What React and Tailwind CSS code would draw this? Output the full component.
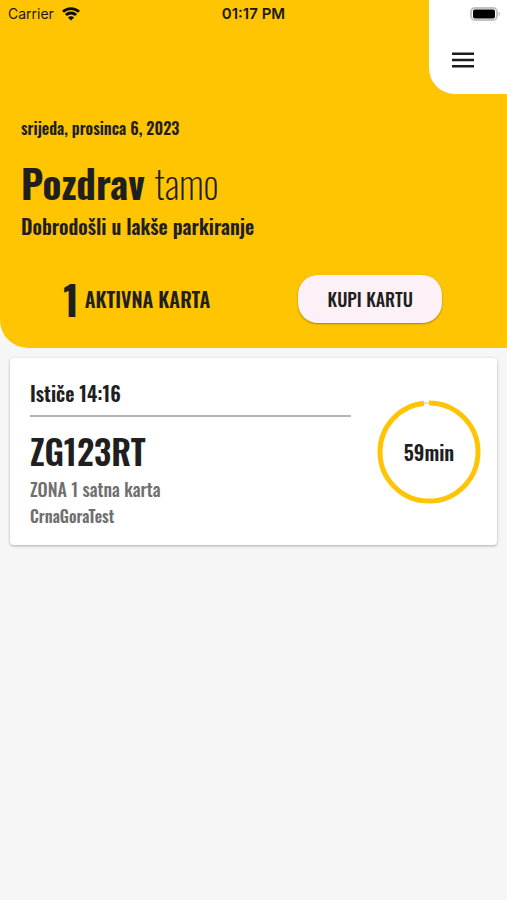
const TICKETS = [
  {
    id: 1,
    expires: '14:16',
    plate: 'ZG123RT',
    zone: 'ZONA 1 satna karta',
    owner: 'CrnaGoraTest',
    minutesLeft: 59,
  },
];

function WifiIcon() {
  return (
    <svg width="18" height="14" viewBox="0 0 18 14" fill="none" stroke="#0f0d05" strokeWidth="2.8" aria-hidden="true">
      <path d="M1 4.8C5.4 .6 12.6 .6 17 4.8" />
      <path d="M3.9 8.1C6.8 5.3 11.2 5.3 14.1 8.1" />
      <path d="M9 13.6 5.9 10.5C7.6 8.9 10.4 8.9 12.1 10.5Z" fill="#0f0d05" stroke="none" />
    </svg>
  );
}

function BatteryIcon() {
  return (
    <svg width="31" height="14" viewBox="0 0 31 14" aria-hidden="true">
      <rect x="1" y="1" width="26" height="12" rx="4" fill="#fff" stroke="#c2c2c2" strokeWidth="2" />
      <rect x="3" y="2.5" width="22" height="9" rx="2" fill="#000" />
      <path d="M28.6 4.8c1.7.6 1.7 3.8 0 4.4Z" fill="#b9b9b9" />
    </svg>
  );
}

function StatusBar() {
  return (
    <div className="relative z-10 grid grid-cols-3 items-center h-7 px-2 text-sm font-[Inter,sans-serif] text-[#1c1804]">
      <div className="flex items-center gap-2">
        Carrier
        <WifiIcon />
      </div>
      <time className="text-center text-[15px] font-semibold">01:17 PM</time>
      <div className="flex justify-end -mr-0.5">
        <BatteryIcon />
      </div>
    </div>
  );
}

function MenuTab() {
  return (
    <div className="absolute top-0 right-0 flex items-end justify-center w-[78px] h-[94px] pr-2.5 pb-4 rounded-bl-[26px] bg-white">
      <button type="button" aria-label="Izbornik" className="flex items-center justify-center size-9 cursor-pointer">
        <svg width="22" height="16" viewBox="0 0 22 16" fill="#1d1b20" aria-hidden="true">
          <path d="M0 .5h22v2.4H0zM0 6.8h22v2.4H0zM0 13.1h22v2.4H0z" />
        </svg>
      </button>
    </div>
  );
}

function TimeRing({ minutes }) {
  return (
    <div className="grid place-items-center size-[104px] shrink-0">
      <svg viewBox="0 0 104 104" className="col-start-1 row-start-1 size-full" fill="none" aria-hidden="true">
        <circle cx="52" cy="52" r="49" stroke="#dcdcdc" strokeWidth="2" />
        <circle
          cx="52"
          cy="52"
          r="49"
          stroke="#ffc505"
          strokeWidth="5"
          pathLength="60"
          strokeDasharray={`${minutes} ${60 - minutes}`}
          transform="rotate(-90 52 52)"
        />
      </svg>
      <span className="col-start-1 row-start-1 text-xl leading-6 font-semibold">{minutes}min</span>
    </div>
  );
}

function TicketCard({ ticket }) {
  return (
    <article className="flex items-center gap-[26px] px-4 py-4 rounded-sm bg-white shadow-[0_1px_3px_rgba(0,0,0,0.3)]">
      <div className="flex-1 min-w-0 pt-[5px] pl-1">
        <p className="text-xl leading-7 font-semibold">Ističe {ticket.expires}</p>
        <hr className="mt-2 border-0 h-0.5 bg-[#b4b4b4]" />
        <h2 className="mt-3.5 text-[34px] leading-10 font-semibold">{ticket.plate}</h2>
        <p className="mt-1 text-lg leading-7 font-medium text-[#6f6f6f]">{ticket.zone}</p>
        <p className="text-base leading-[26px] font-semibold text-[#6f6f6f]">{ticket.owner}</p>
      </div>
      <TimeRing minutes={ticket.minutesLeft} />
    </article>
  );
}

export default function App() {
  return (
    <div className="min-h-screen bg-[#f6f6f6] text-[#1f1f1f] font-[Oswald,'Liberation_Sans_Narrow',sans-serif]">
      <header className="relative pb-[25px] rounded-bl-[28px] bg-[#ffc502]">
        <MenuTab />
        <StatusBar />
        <div className="px-[21px] pt-[90px]">
          <p className="text-base leading-5 font-semibold">srijeda, prosinca 6, 2023</p>
          <h1 className="mt-[22px] text-[39px] leading-11 font-bold">
            Pozdrav <span className="font-extralight">tamo</span>
          </h1>
          <p className="mt-2 text-xl leading-7 font-semibold">Dobrodošli u lakše parkiranje</p>
        </div>
        <div className="grid grid-cols-2 items-center mt-[35px] px-5">
          <p className="flex items-center justify-center gap-1.5 text-xl leading-6 font-semibold">
            <strong className="text-[40px] leading-12 font-bold">1</strong>
            AKTIVNA KARTA
          </p>
          <button
            type="button"
            className="justify-self-center w-36 h-12 rounded-[20px] bg-[#fbf1f6] text-lg font-medium shadow-[0_1px_2px_rgba(0,0,0,0.35)] cursor-pointer"
          >
            KUPI KARTU
          </button>
        </div>
      </header>

      <main className="flex flex-col gap-2.5 px-2.5 pt-2.5">
        {TICKETS.map((ticket) => (
          <TicketCard key={ticket.id} ticket={ticket} />
        ))}
      </main>
    </div>
  );
}
